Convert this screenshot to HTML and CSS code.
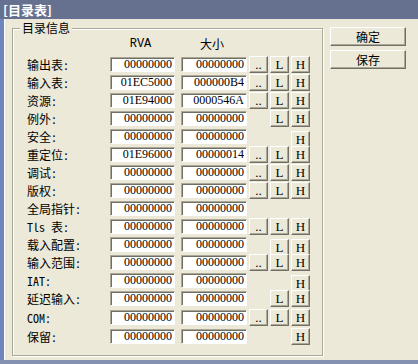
FILE: index.html
```html
<!DOCTYPE html>
<html lang="zh-CN">
<head>
    <meta charset="UTF-8">
    <meta name="viewport" content="width=device-width, initial-scale=1.0">
    <title>目录表</title>
    <link rel="stylesheet" href="styles.css">
</head>
<body>
    <div class="caption">[目录表]</div>
    <div class="frame">
        <div class="frame-edge"></div>
        <div class="client">
            <fieldset class="group">
                <legend>目录信息</legend>
                <div class="dir-table">
                    <div class="head-row">
                        <span class="head-rva">RVA</span>
                        <span class="head-size">大小</span>
                    </div>

                    <div class="dir-row">
                        <span class="dir-label">输出表:</span>
                        <input class="hex-field" value="00000000" readonly>
                        <input class="hex-field" value="00000000" readonly>
                        <div class="btn-set"><button class="btn btn-dots">..</button><button class="btn btn-l">L</button><button class="btn btn-h">H</button></div>
                    </div>
                    <div class="dir-row">
                        <span class="dir-label">输入表:</span>
                        <input class="hex-field" value="01EC5000" readonly>
                        <input class="hex-field" value="000000B4" readonly>
                        <div class="btn-set"><button class="btn btn-dots">..</button><button class="btn btn-l">L</button><button class="btn btn-h">H</button></div>
                    </div>
                    <div class="dir-row">
                        <span class="dir-label">资源:</span>
                        <input class="hex-field" value="01E94000" readonly>
                        <input class="hex-field" value="0000546A" readonly>
                        <div class="btn-set"><button class="btn btn-dots">..</button><button class="btn btn-l">L</button><button class="btn btn-h">H</button></div>
                    </div>
                    <div class="dir-row">
                        <span class="dir-label">例外:</span>
                        <input class="hex-field" value="00000000" readonly>
                        <input class="hex-field" value="00000000" readonly>
                        <div class="btn-set"><button class="btn btn-l">L</button><button class="btn btn-h">H</button></div>
                    </div>
                    <div class="dir-row">
                        <span class="dir-label">安全:</span>
                        <input class="hex-field" value="00000000" readonly>
                        <input class="hex-field" value="00000000" readonly>
                        <div class="btn-set"><button class="btn btn-h low">H</button></div>
                    </div>
                    <div class="dir-row">
                        <span class="dir-label">重定位:</span>
                        <input class="hex-field" value="01E96000" readonly>
                        <input class="hex-field" value="00000014" readonly>
                        <div class="btn-set"><button class="btn btn-dots">..</button><button class="btn btn-l">L</button><button class="btn btn-h">H</button></div>
                    </div>
                    <div class="dir-row">
                        <span class="dir-label">调试:</span>
                        <input class="hex-field" value="00000000" readonly>
                        <input class="hex-field" value="00000000" readonly>
                        <div class="btn-set"><button class="btn btn-dots">..</button><button class="btn btn-l">L</button><button class="btn btn-h">H</button></div>
                    </div>
                    <div class="dir-row">
                        <span class="dir-label">版权:</span>
                        <input class="hex-field" value="00000000" readonly>
                        <input class="hex-field" value="00000000" readonly>
                        <div class="btn-set"><button class="btn btn-dots">..</button><button class="btn btn-l">L</button><button class="btn btn-h">H</button></div>
                    </div>
                    <div class="dir-row">
                        <span class="dir-label">全局指针:</span>
                        <input class="hex-field" value="00000000" readonly>
                        <input class="hex-field" value="00000000" readonly>
                    </div>
                    <div class="dir-row">
                        <span class="dir-label">Tls 表:</span>
                        <input class="hex-field" value="00000000" readonly>
                        <input class="hex-field" value="00000000" readonly>
                        <div class="btn-set"><button class="btn btn-dots">..</button><button class="btn btn-l">L</button><button class="btn btn-h">H</button></div>
                    </div>
                    <div class="dir-row">
                        <span class="dir-label">载入配置:</span>
                        <input class="hex-field" value="00000000" readonly>
                        <input class="hex-field" value="00000000" readonly>
                        <div class="btn-set"><button class="btn btn-l low">L</button><button class="btn btn-h low">H</button></div>
                    </div>
                    <div class="dir-row">
                        <span class="dir-label">输入范围:</span>
                        <input class="hex-field" value="00000000" readonly>
                        <input class="hex-field" value="00000000" readonly>
                        <div class="btn-set"><button class="btn btn-dots">..</button><button class="btn btn-l">L</button><button class="btn btn-h">H</button></div>
                    </div>
                    <div class="dir-row">
                        <span class="dir-label">IAT:</span>
                        <input class="hex-field" value="00000000" readonly>
                        <input class="hex-field" value="00000000" readonly>
                        <div class="btn-set"><button class="btn btn-h low">H</button></div>
                    </div>
                    <div class="dir-row">
                        <span class="dir-label">延迟输入:</span>
                        <input class="hex-field" value="00000000" readonly>
                        <input class="hex-field" value="00000000" readonly>
                        <div class="btn-set"><button class="btn btn-l">L</button><button class="btn btn-h">H</button></div>
                    </div>
                    <div class="dir-row spaced">
                        <span class="dir-label">COM:</span>
                        <input class="hex-field" value="00000000" readonly>
                        <input class="hex-field" value="00000000" readonly>
                        <div class="btn-set"><button class="btn btn-dots">..</button><button class="btn btn-l">L</button><button class="btn btn-h">H</button></div>
                    </div>
                    <div class="dir-row spaced">
                        <span class="dir-label">保留:</span>
                        <input class="hex-field" value="00000000" readonly>
                        <input class="hex-field" value="00000000" readonly>
                        <div class="btn-set"><button class="btn btn-h">H</button></div>
                    </div>
                </div>
            </fieldset>

            <div class="side">
                <button class="btn side-btn">确定</button>
                <button class="btn side-btn">保存</button>
            </div>
        </div>
    </div>
    <div class="bottom-bar"></div>
</body>
</html>
```

FILE: styles.css
```css
* {
    box-sizing: border-box;
}
html, body {
    margin: 0;
}
body {
    width: 418px;
    height: 364px;
    overflow: hidden;
    background-color: #ece9d8;
    color: #000;
    font-family: "Noto Sans Mono CJK SC", "Noto Sans CJK SC", sans-serif;
    font-size: 12px;
}

/* window caption */
.caption {
    height: 19px;
    padding-left: 3px;
    background-color: #66718f;
    color: #fff;
    font: bold 13px/19px "Noto Sans CJK SC", sans-serif;
}
.frame {
    display: flex;
    height: 341px;
}
.frame-edge {
    width: 5px;
    background-color: #7085bd;
    border-right: 1px solid #fff;
}
.client {
    flex: 1;
    display: flex;
    align-items: flex-start;
    gap: 7px;
    padding: 2px 0 0 7px;
}
.bottom-bar {
    height: 4px;
    background-color: #8591b0;
}

/* group box */
.group {
    margin: 0;
    width: 311px;
    height: 335px;
    padding: 0;
    border: 1px solid #aca899;
    box-shadow: inset 1px 1px 0 #fff, 1px 1px 0 #fff;
}
.group legend {
    margin-left: 7px;
    padding: 0 2px;
    background-color: #ece9d8;
    font: 12px/14px "Noto Sans CJK SC", sans-serif;
}
.dir-table {
    padding: 1px 0 0 14px;
}
.head-row {
    display: flex;
    height: 21px;
    padding-top: 1px;
    line-height: 14px;
}
.head-rva {
    width: 65px;
    margin-left: 81px;
    text-align: center;
    font-family: "Liberation Mono", monospace;
    font-size: 12px;
}
.head-size {
    width: 66px;
    margin-left: 6px;
    text-align: center;
    font-family: "Noto Sans CJK SC", sans-serif;
    font-size: 12px;
}

/* rows */
.dir-row {
    display: flex;
    align-items: flex-start;
    height: 18px;
}
.dir-row.spaced {
    margin-top: 1px;
}
.dir-label {
    width: 83px;
    line-height: 16px;
}
.hex-field {
    width: 65px;
    height: 15px;
    margin: 0;
    padding: 0 2px 0 0;
    border: 1px solid;
    border-color: #aca899 #fff #fff #aca899;
    box-shadow: inset 1px 1px 0 #716f64;
    background-color: #fff;
    color: #000;
    text-align: right;
    font-family: "Liberation Serif", serif;
    font-size: 12px;
    line-height: 13px;
}
.hex-field + .hex-field {
    width: 66px;
    margin-left: 6px;
}

/* push buttons */
.btn {
    margin: 0;
    padding: 0;
    border: 1px solid;
    border-color: #fff #716f64 #716f64 #fff;
    box-shadow: inset -1px -1px 0 #aca899;
    background-color: #ece9d8;
    color: #000;
    cursor: pointer;
}
.btn-set {
    display: grid;
    grid-template-columns: repeat(3, 19px);
    column-gap: 2px;
    margin: -1px 0 0 2px;
}
.btn-set .btn {
    height: 17px;
    font-family: "Liberation Serif", serif;
    font-size: 13px;
    line-height: 14px;
}
.btn-dots {
    grid-column: 1;
}
.btn-l {
    grid-column: 2;
}
.btn-h {
    grid-column: 3;
}
.btn-set .btn.low {
    margin-top: 3px;
}

.side {
    display: flex;
    flex-direction: column;
    gap: 4px;
    margin-top: 6px;
}
.side-btn {
    width: 76px;
    height: 19px;
    font-family: "Noto Sans CJK SC", sans-serif;
    font-size: 12px;
    line-height: 16px;
}
```
